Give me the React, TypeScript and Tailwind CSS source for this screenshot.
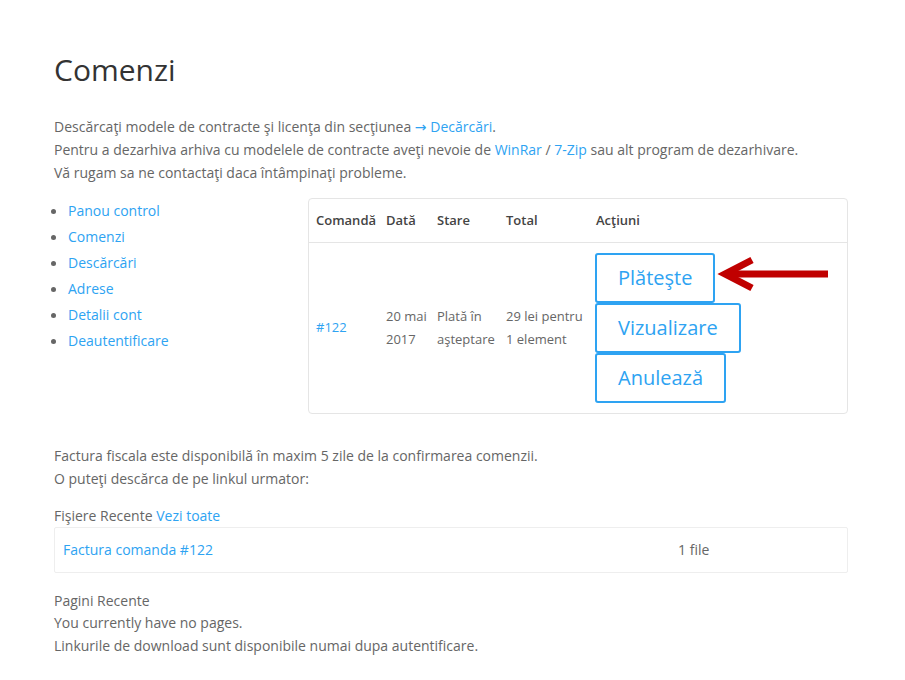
import React from "react";

const links = [
  "Panou control",
  "Comenzi",
  "Descărcări",
  "Adrese",
  "Detalii cont",
  "Deautentificare",
];

const A: React.FC<{ children: React.ReactNode }> = ({ children }) => (
  <a href="#" className="text-[#2ea3f2]">
    {children}
  </a>
);

const btn =
  "border-2 border-[#2ea3f2] rounded-[3px] px-[21px] py-[11px] text-[20px] leading-[24px] text-[#2ea3f2]";

const App: React.FC = () => {
  return (
    <div className="min-h-[680px] bg-white font-['Open_Sans',sans-serif] text-[14px] text-[#666]">
      <div className="w-[794px] ml-[54px] pt-[50px]">
        <h1 className="text-[30px] leading-[40px] text-[#333] font-normal">Comenzi</h1>

        {/* Intro */}
        <div className="mt-[25px] leading-[23px]">
          <p className="h-[23px]">
            Descărcaţi modele de contracte şi licenţa din secţiunea{" "}
            <A>
              <span className="font-['DejaVu_Sans',sans-serif] leading-none">→</span> Decărcări
            </A>
            .
          </p>
          <p>
            Pentru a dezarhiva arhiva cu modelele de contracte aveţi nevoie de <A>WinRar</A> /{" "}
            <A>7-Zip</A> sau alt program de dezarhivare.
          </p>
          <p>Vă rugam sa ne contactaţi daca întâmpinaţi probleme.</p>
        </div>

        {/* Nav + orders */}
        <div className="mt-[13px] flex">
          <ul className="w-[254px] pt-[1px] leading-[26px]">
            {links.map((l) => (
              <li key={l} className="flex items-center">
                <span className="w-[5px] h-[5px] rounded-full bg-[#666] ml-[-3px] mr-[12px]"></span>
                <A>{l}</A>
              </li>
            ))}
          </ul>

          <div className="w-[540px] mt-[1px] border border-[#e5e5e5] rounded-[4px]">
            <table className="w-full text-[13px] border-collapse">
              <thead>
                <tr className="border-b border-[#e5e5e5] text-left text-[#444]">
                  <th className="w-[69px] pl-[7px] h-[43px] font-semibold">Comandă</th>
                  <th className="w-[51px] pl-[8px] font-semibold">Dată</th>
                  <th className="w-[69px] pl-[8px] font-semibold">Stare</th>
                  <th className="w-[90px] pl-[8px] font-semibold">Total</th>
                  <th className="pl-[8px] font-semibold">Acţiuni</th>
                </tr>
              </thead>
              <tbody className="leading-[23px]">
                <tr>
                  <td className="pl-[7px] align-middle">
                    <A>#122</A>
                  </td>
                  <td className="pl-[8px]">
                    20 mai
                    <br />
                    2017
                  </td>
                  <td className="pl-[8px]">
                    Plată în
                    <br />
                    aşteptare
                  </td>
                  <td className="pl-[8px]">
                    29 lei pentru
                    <br />1 element
                  </td>
                  <td className="pl-[7px] py-[10px]">
                    <div className="flex flex-col items-start">
                      <div className="relative">
                        <button className={btn}>Plăteşte</button>
                        <svg
                          className="absolute left-full top-[1px] ml-[1px]"
                          width="114"
                          height="40"
                          viewBox="0 0 114 40"
                        >
                          <line x1="14" y1="20" x2="112" y2="20" stroke="#c00000" strokeWidth="7" />
                          <polyline
                            points="36,6 9,20 36,34"
                            fill="none"
                            stroke="#c00000"
                            strokeWidth="7"
                            strokeLinejoin="miter"
                          />
                        </svg>
                      </div>
                      <button className={btn}>Vizualizare</button>
                      <button className={btn}>Anulează</button>
                    </div>
                  </td>
                </tr>
              </tbody>
            </table>
          </div>
        </div>

        {/* Invoice info */}
        <div className="mt-[30px] leading-[23px]">
          <p>Factura fiscala este disponibilă în maxim 5 zile de la confirmarea comenzii.</p>
          <p>O puteţi descărca de pe linkul urmator:</p>
        </div>

        <p className="mt-[14px] leading-[23px]">
          Fişiere Recente <A>Vezi toate</A>
        </p>
        <div className="flex items-center h-[46px] border border-[#eee] rounded-[2px]">
          <div className="w-[623px] pl-[8px]">
            <A>Factura comanda #122</A>
          </div>
          <div>1 file</div>
        </div>

        <div className="mt-[17px] leading-[22.5px]">
          <p>Pagini Recente</p>
          <p>You currently have no pages.</p>
          <p>Linkurile de download sunt disponibile numai dupa autentificare.</p>
        </div>
      </div>
    </div>
  );
};

export default App;
